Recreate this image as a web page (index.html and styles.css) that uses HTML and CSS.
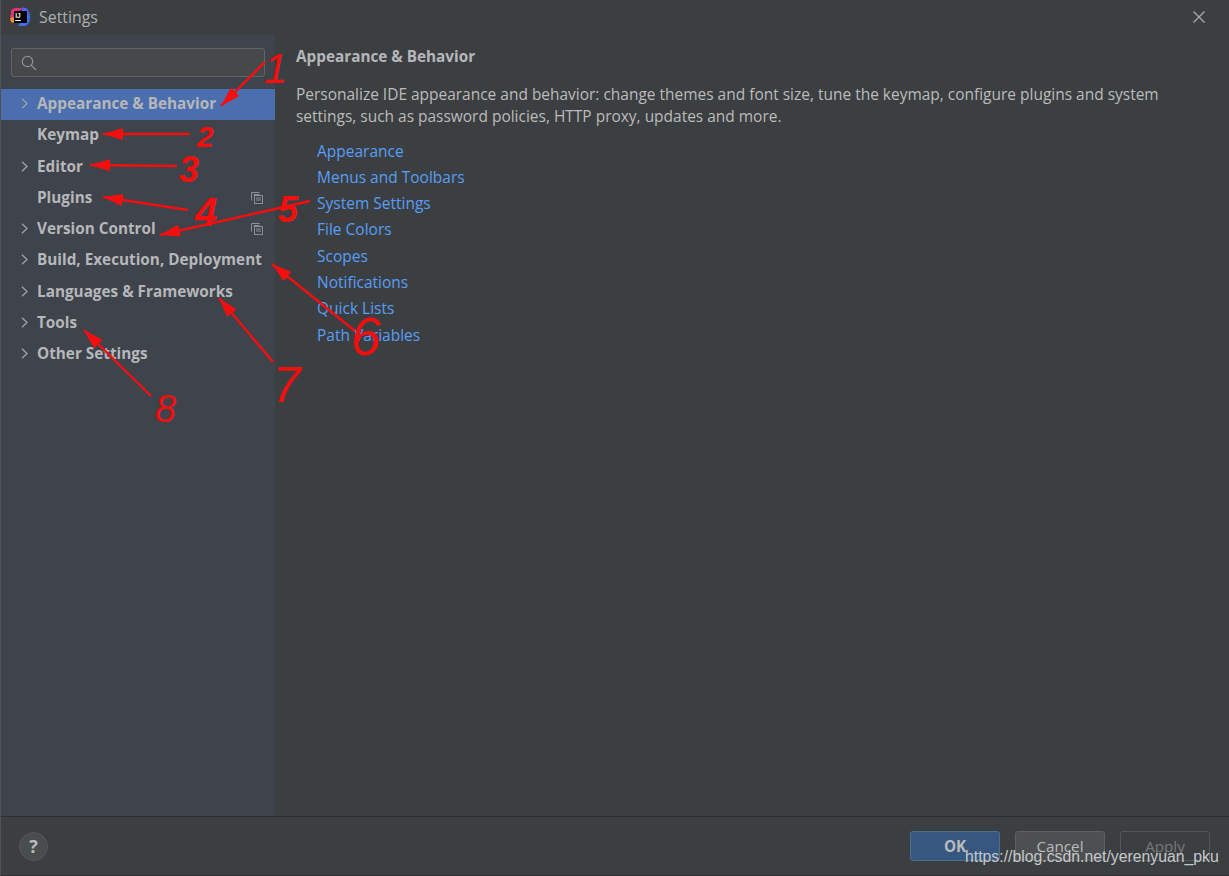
FILE: index.html
```html
<!DOCTYPE html>
<html lang="en">
<head>
<meta charset="utf-8">
<title>Settings</title>
<link rel="stylesheet" href="styles.css">
</head>
<body>
<div class="window">
  <header class="titlebar">
    <svg class="logo" viewBox="0 0 20 20" width="20" height="20" aria-hidden="true">
      <path d="M1 10 L3 6 L0 9 Z" fill="#f97a12"/>
      <path d="M1 4 Q2 1 6 1 L11 1 L8 12 L3 16 L1 12 Z" fill="#e8326f"/>
      <path d="M0 11 L5 10 L5 16 L1 15 Z" fill="#f9902a"/>
      <path d="M11 1 Q16 0 18 3 Q20 6 20 11 Q20 17 15 19 L8 19 L14 10 Z" fill="#3a6ff0"/>
      <path d="M13 0 L18 3 L15 8 Z" fill="#6b57ff"/>
      <rect x="4" y="4" width="13" height="12" fill="#000"/>
      <text x="5.2" y="10.6" class="logo-text">IJ</text>
      <rect x="5.2" y="13" width="5.5" height="1" fill="#fff"/>
    </svg>
    <span class="title">Settings</span>
    <svg class="close" viewBox="0 0 14 14" width="14" height="14" aria-hidden="true">
      <path d="M1.5 1.5 L12.5 12.5 M12.5 1.5 L1.5 12.5" stroke="#a9abad" stroke-width="1.3" fill="none"/>
    </svg>
  </header>

  <div class="main">
    <nav class="sidebar">
      <div class="search">
        <svg viewBox="0 0 16 16" width="16" height="16" aria-hidden="true">
          <circle cx="6.5" cy="6.5" r="5.2" stroke="#8c9092" stroke-width="1.2" fill="none"/>
          <path d="M10.4 10.4 L15 15" stroke="#8c9092" stroke-width="1.3" fill="none"/>
        </svg>
      </div>
      <ul class="tree">
        <li class="row selected"><svg class="chev" viewBox="0 0 7 11" width="7" height="11"><path d="M1 .8 L6 5.5 L1 10.2" /></svg><span>Appearance &amp; Behavior</span></li>
        <li class="row"><span class="chev-space"></span><span>Keymap</span></li>
        <li class="row"><svg class="chev" viewBox="0 0 7 11" width="7" height="11"><path d="M1 .8 L6 5.5 L1 10.2" /></svg><span>Editor</span></li>
        <li class="row"><span class="chev-space"></span><span>Plugins</span>
          <svg class="copy" viewBox="0 0 12 12" width="12" height="12"><path d="M.5 8.5 V.5 H8.5 M2.5 2.5 H8.5" /><rect x="3.5" y="3.5" width="8" height="8"/><path d="M5 6 H10 M5 8 H10"/></svg></li>
        <li class="row"><svg class="chev" viewBox="0 0 7 11" width="7" height="11"><path d="M1 .8 L6 5.5 L1 10.2" /></svg><span>Version Control</span>
          <svg class="copy" viewBox="0 0 12 12" width="12" height="12"><path d="M.5 8.5 V.5 H8.5 M2.5 2.5 H8.5" /><rect x="3.5" y="3.5" width="8" height="8"/><path d="M5 6 H10 M5 8 H10"/></svg></li>
        <li class="row"><svg class="chev" viewBox="0 0 7 11" width="7" height="11"><path d="M1 .8 L6 5.5 L1 10.2" /></svg><span>Build, Execution, Deployment</span></li>
        <li class="row"><svg class="chev" viewBox="0 0 7 11" width="7" height="11"><path d="M1 .8 L6 5.5 L1 10.2" /></svg><span>Languages &amp; Frameworks</span></li>
        <li class="row"><svg class="chev" viewBox="0 0 7 11" width="7" height="11"><path d="M1 .8 L6 5.5 L1 10.2" /></svg><span>Tools</span></li>
        <li class="row"><svg class="chev" viewBox="0 0 7 11" width="7" height="11"><path d="M1 .8 L6 5.5 L1 10.2" /></svg><span>Other Settings</span></li>
      </ul>
    </nav>

    <section class="content">
      <h1 class="heading">Appearance &amp; Behavior</h1>
      <p class="desc">Personalize IDE appearance and behavior: change themes and font size, tune the keymap, configure plugins and system settings, such as password policies, HTTP proxy, updates and more.</p>
      <ul class="links">
        <li><a>Appearance</a></li>
        <li><a>Menus and Toolbars</a></li>
        <li><a>System Settings</a></li>
        <li><a>File Colors</a></li>
        <li><a>Scopes</a></li>
        <li><a>Notifications</a></li>
        <li><a>Quick Lists</a></li>
        <li><a>Path Variables</a></li>
      </ul>
    </section>
  </div>

  <footer class="footer">
    <div class="help">?</div>
    <div class="buttons">
      <button class="btn primary">OK</button>
      <button class="btn">Cancel</button>
      <button class="btn disabled">Apply</button>
    </div>
  </footer>
</div>

<svg class="arrows" viewBox="0 0 1229 876" width="1229" height="876" aria-hidden="true">
  <defs>
    <marker id="head" viewBox="0 0 20 12" refX="20" refY="6" markerWidth="20" markerHeight="12" markerUnits="userSpaceOnUse" orient="auto">
      <path d="M0 0 L20 6 L0 12 Z" fill="#f40f0f"/>
    </marker>
  </defs>
  <g class="arrow-lines">
    <line x1="265" y1="62" x2="221" y2="106" marker-end="url(#head)"/>
    <line x1="190" y1="134" x2="103" y2="134" marker-end="url(#head)"/>
    <line x1="177" y1="166" x2="90" y2="165" marker-end="url(#head)"/>
    <line x1="188" y1="210" x2="103" y2="197" marker-end="url(#head)"/>
    <line x1="310" y1="201" x2="160" y2="235" marker-end="url(#head)"/>
    <line x1="355" y1="331" x2="272" y2="264" marker-end="url(#head)"/>
    <line x1="273" y1="362" x2="219" y2="298" marker-end="url(#head)"/>
    <line x1="151" y1="396" x2="84" y2="330" marker-end="url(#head)"/>
  </g>
</svg>
<span class="digit d1">1</span>
<span class="digit d2">2</span>
<span class="digit d3">3</span>
<span class="digit d4">4</span>
<span class="digit d5">5</span>
<span class="digit d6">6</span>
<span class="digit d7">7</span>
<span class="digit d8">8</span>
<span class="watermark">https://blog.csdn.net/yerenyuan_pku</span>
</body>
</html>
```
FILE: styles.css
```css
* { box-sizing: border-box; }
html, body { margin: 0; padding: 0; height: 100%; overflow: hidden; }
body {
  background: #3c3f41;
  font-family: "Open Sans", "Noto Sans", sans-serif;
  color: #bbbbbb;
}
.window {
  width: 1229px;
  height: 876px;
  display: flex;
  flex-direction: column;
  border-left: 1px solid #505254;
  border-bottom: 1px solid #2f3133;
}
.titlebar {
  height: 35px;
  flex: none;
  display: flex;
  align-items: center;
  padding: 0 23px 0 9px;
  background: #3c3f41;
}
.logo { flex: none; margin-top: -1px; }
.logo-text { font: 700 6.5px "Liberation Sans", sans-serif; fill: #fff; }
.title { margin-left: 9px; font-size: 15.9px; color: #aeb0b2; flex: 1; margin-top: -1px; }
.close { flex: none; margin-top: -1px; }

.main { flex: 1; display: flex; min-height: 0; }
.sidebar {
  width: 274px;
  flex: none;
  background: #3f434c;
  padding-top: 13px;
}
.search {
  width: 254px;
  height: 29px;
  margin-left: 10px;
  margin-bottom: 12px;
  background: #45494a;
  border: 1px solid #646464;
  border-radius: 3px;
  display: flex;
  align-items: center;
  padding-left: 9px;
}
.tree { list-style: none; margin: 0; padding: 0; }
.row {
  height: 31.25px;
  display: flex;
  align-items: center;
  padding: 0 12px 0 20px;
  font-size: 15.3px;
  font-weight: 700;
  color: #b5b7b9;
  white-space: nowrap;
}
.row > span { margin-bottom: 3px; }
.row.selected { background: #4b6eaf; }
.chev { flex: none; margin-right: 9px; margin-top: -2px; }
.chev path { fill: none; stroke: #a0a3a6; stroke-width: 1.3; }
.chev-space { flex: none; width: 16px; }
.copy { flex: none; margin-left: auto; margin-top: -1px; }
.copy path, .copy rect { fill: none; stroke: #8c8f92; stroke-width: 1; }

.content { flex: 1; padding: 10px 30px 0 21px; min-width: 0; }
.heading {
  margin: 0;
  font-size: 15.3px;
  font-weight: 700;
  line-height: 22px;
  color: #b5b7b9;
}
.desc {
  margin: 17px 0 0;
  font-size: 15.48px;
  line-height: 21.5px;
  color: #bbbbbb;
}
.links { list-style: none; margin: 10.4px 0 0 21px; padding: 0; }
.links li { height: 26.3px; display: flex; align-items: center; }
.links a { font-size: 15.5px; color: #589df6; }

.footer {
  height: 59px;
  flex: none;
  border-top: 1px solid #2d2f30;
  display: flex;
  align-items: center;
  justify-content: space-between;
  padding: 0 19px 0 18px;
  background: #3c3f41;
}
.help {
  width: 29px;
  height: 29px;
  border-radius: 50%;
  background: #4a4d4f;
  border: 1px solid #55585a;
  color: #bbbbbb;
  font-size: 18px;
  font-weight: 700;
  display: flex;
  align-items: center;
  justify-content: center;
}
.buttons { display: flex; gap: 15px; }
.btn {
  width: 90px;
  height: 30px;
  border-radius: 3px;
  border: 1px solid #5e6060;
  background: #4c5052;
  color: #bbbbbb;
  font: 400 15.2px "Open Sans", sans-serif;
  padding: 0;
}
.btn.primary { background: #365880; border-color: #4c708c; font-weight: 700; }
.btn.disabled { background: transparent; border-color: #55585a; color: #777777; }

.arrows { position: absolute; left: 0; top: 0; pointer-events: none; }
.arrow-lines line { stroke: #f40f0f; stroke-width: 2.4; }
.digit {
  position: absolute;
  color: #f40f0f;
  font-family: "Liberation Sans", sans-serif;
  font-style: italic;
  line-height: 1;
  white-space: nowrap;
}
.d1 { left: 264px; top: 48px; font-size: 42px; }
.d2 { left: 197px; top: 122px; font-size: 30px; font-weight: 700; }
.d3 { left: 179px; top: 152px; font-size: 36px; font-weight: 700; }
.d4 { left: 195px; top: 192px; font-size: 40px; font-weight: 700; }
.d5 { left: 278px; top: 192px; font-size: 36px; font-weight: 700; }
.d6 { left: 351px; top: 309px; font-size: 54px; }
.d7 { left: 273px; top: 360px; font-size: 50px; }
.d8 { left: 155px; top: 390px; font-size: 38px; }
.watermark {
  position: absolute;
  left: 965px;
  top: 848px;
  font: 400 15.8px/18px "Liberation Sans", sans-serif;
  color: #c6c8ca;
  white-space: nowrap;
}
```
